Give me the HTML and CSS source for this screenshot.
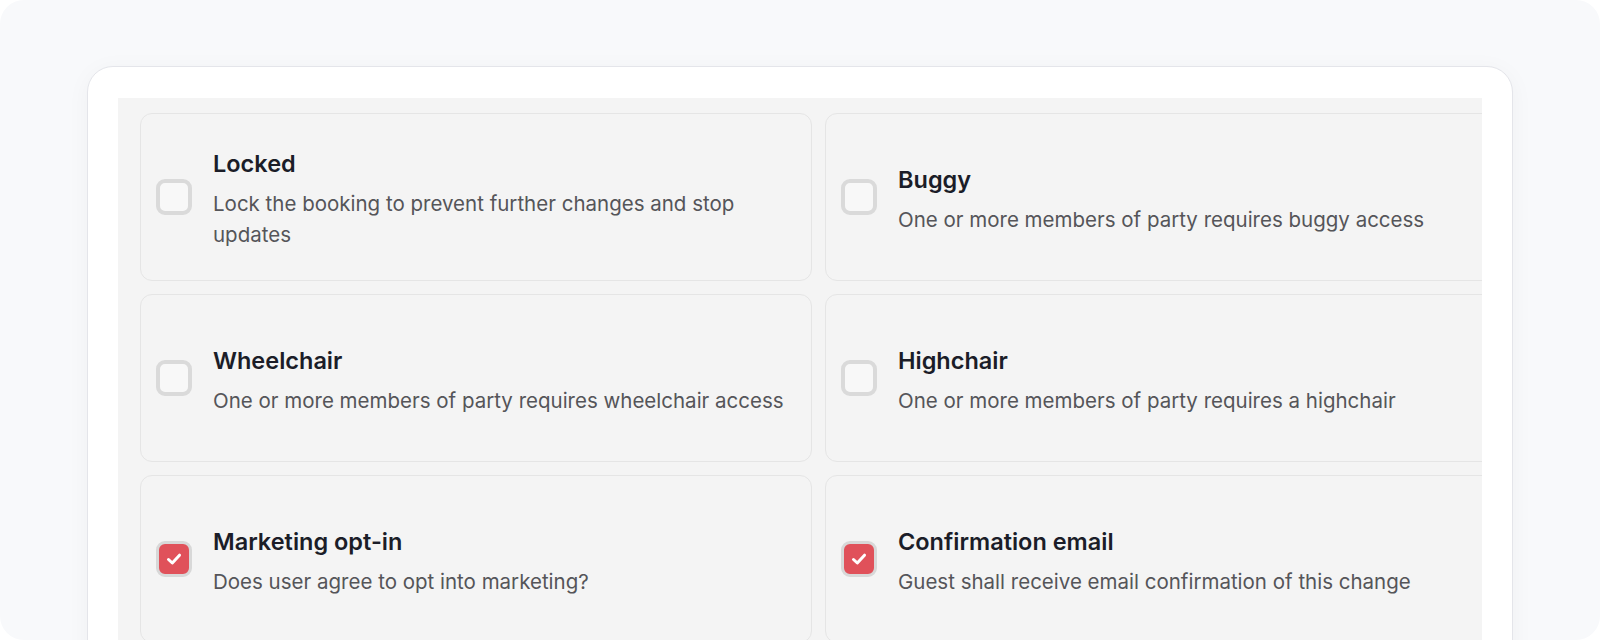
FILE: index.html
```html
<!DOCTYPE html>
<html lang="en">
<head>
<meta charset="utf-8">
<title>Booking options</title>
<link rel="stylesheet" href="styles.css">
</head>
<body>
<div class="frame">
  <div class="panel">
    <div class="well">
      <div class="grid">
        <label class="option">
          <span class="box"></span>
          <span class="text">
            <span class="title">Locked</span>
            <span class="desc">Lock the booking to prevent further changes and stop updates</span>
          </span>
        </label>
        <label class="option">
          <span class="box"></span>
          <span class="text">
            <span class="title">Buggy</span>
            <span class="desc">One or more members of party requires buggy access</span>
          </span>
        </label>
        <label class="option">
          <span class="box"></span>
          <span class="text">
            <span class="title">Wheelchair</span>
            <span class="desc">One or more members of party requires wheelchair access</span>
          </span>
        </label>
        <label class="option">
          <span class="box"></span>
          <span class="text">
            <span class="title">Highchair</span>
            <span class="desc">One or more members of party requires a highchair</span>
          </span>
        </label>
        <label class="option">
          <span class="box checked"><svg viewBox="0 0 20 20" width="20" height="20"><polyline points="4.5,10.5 8.3,14 15.5,6.2" fill="none" stroke="#fff" stroke-width="3" stroke-linecap="round" stroke-linejoin="round"/></svg></span>
          <span class="text">
            <span class="title">Marketing opt-in</span>
            <span class="desc">Does user agree to opt into marketing?</span>
          </span>
        </label>
        <label class="option">
          <span class="box checked"><svg viewBox="0 0 20 20" width="20" height="20"><polyline points="4.5,10.5 8.3,14 15.5,6.2" fill="none" stroke="#fff" stroke-width="3" stroke-linecap="round" stroke-linejoin="round"/></svg></span>
          <span class="text">
            <span class="title">Confirmation email</span>
            <span class="desc">Guest shall receive email confirmation of this change</span>
          </span>
        </label>
      </div>
    </div>
  </div>
</div>
</body>
</html>
```
FILE: styles.css
```css
html, body {
  margin: 0;
  padding: 0;
  background: #ffffff;
}
body {
  font-family: Inter, "Noto Sans", "Liberation Sans", sans-serif;
}
.frame {
  width: 1600px;
  height: 640px;
  box-sizing: border-box;
  background: #f8f9fb;
  border-radius: 24px;
  overflow: hidden;
  padding: 66px 87px 0 87px;
}
.panel {
  background: #ffffff;
  border: 1px solid #e4e5ea;
  border-radius: 26px;
  padding: 31px 30px 0 30px;
  height: 700px;
  box-shadow: 0 4px 24px rgba(20, 24, 40, 0.04);
}
.well {
  background: #f4f4f4;
  height: 100%;
  overflow: hidden;
  padding: 15px 0 0 22px;
  box-sizing: border-box;
}
.grid {
  display: grid;
  grid-template-columns: 672px 672px;
  grid-auto-rows: 168px;
  column-gap: 13px;
  row-gap: 13px;
}
.option {
  display: flex;
  align-items: center;
  gap: 21px;
  padding: 0 15px;
  box-sizing: border-box;
  border: 1px solid #e5e5e5;
  border-radius: 12px;
  background: #f4f4f4;
}
.box {
  flex: 0 0 auto;
  width: 36px;
  height: 36px;
  box-sizing: border-box;
  border: 4px solid #dadada;
  border-radius: 9px;
  background: #f8f8f8;
  display: flex;
  align-items: center;
  justify-content: center;
}
.box.checked {
  border: 3px solid #d8d8d8;
  background: #e0515a;
}
.text {
  display: flex;
  flex-direction: column;
  gap: 5px;
}
.title {
  font-size: 23.5px;
  font-weight: 600;
  line-height: 39px;
  color: #1b1d28;
}
.desc {
  font-size: 20.5px;
  line-height: 31px;
  color: #555559;
}
```
